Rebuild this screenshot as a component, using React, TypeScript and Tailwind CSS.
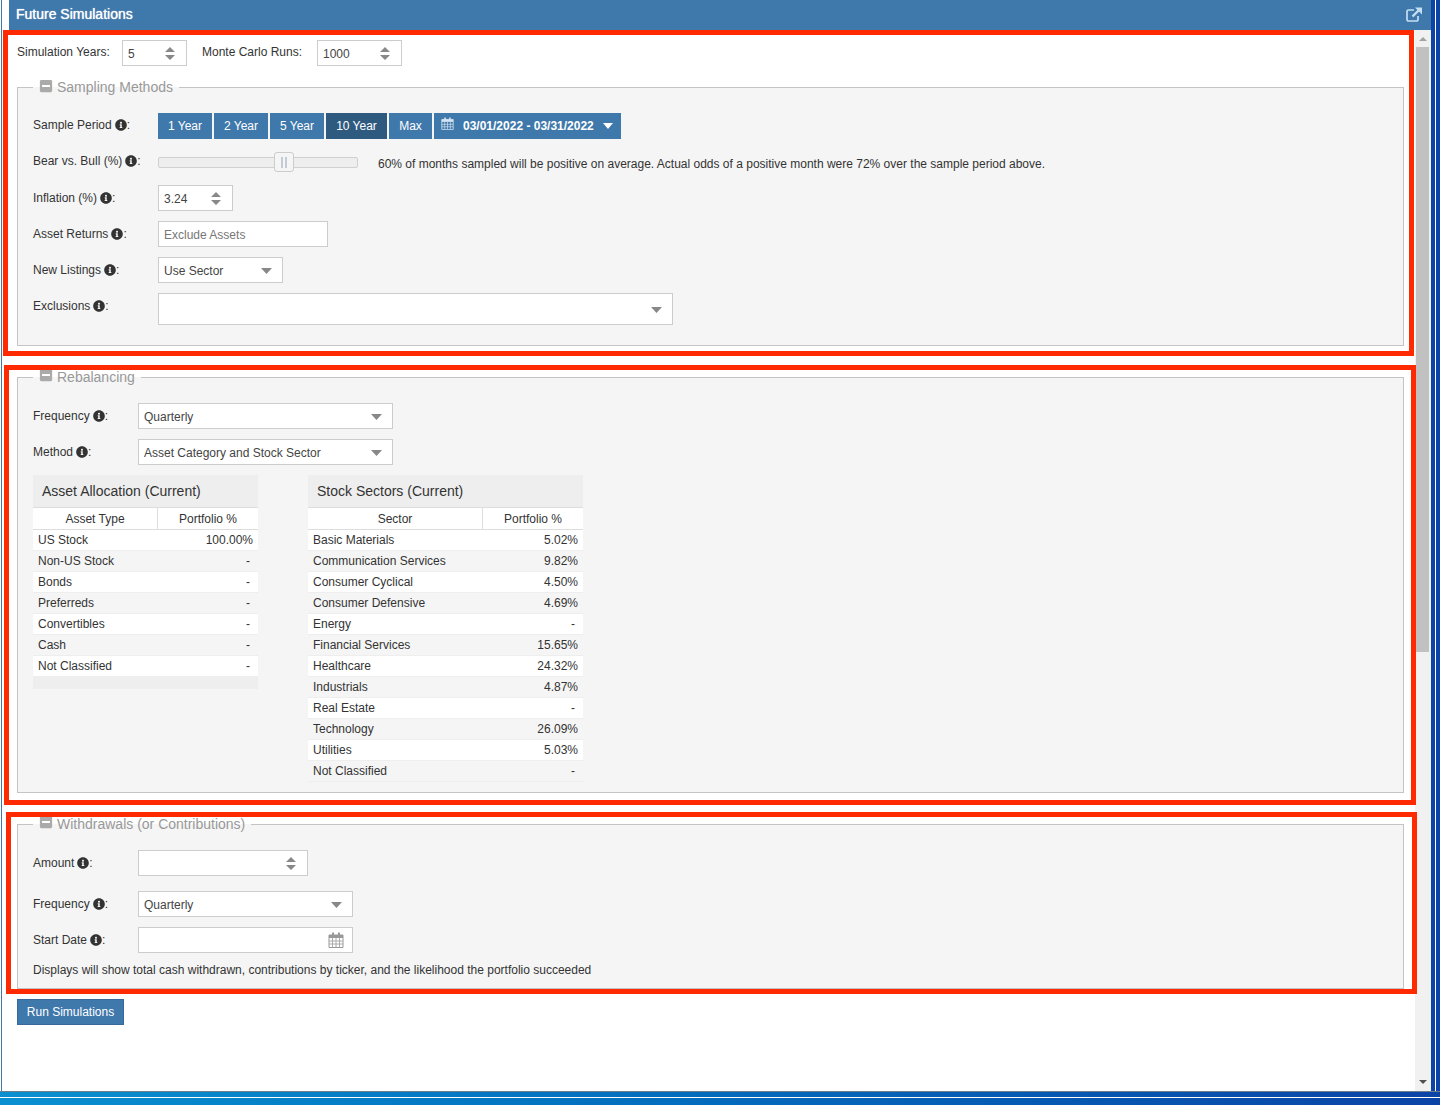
import { ReactNode } from "react";
import { FaInfoCircle, FaMinusSquare } from "react-icons/fa";

const assets = [
  ["US Stock", "100.00%"],
  ["Non-US Stock", "-"],
  ["Bonds", "-"],
  ["Preferreds", "-"],
  ["Convertibles", "-"],
  ["Cash", "-"],
  ["Not Classified", "-"],
];

const sectors = [
  ["Basic Materials", "5.02%"],
  ["Communication Services", "9.82%"],
  ["Consumer Cyclical", "4.50%"],
  ["Consumer Defensive", "4.69%"],
  ["Energy", "-"],
  ["Financial Services", "15.65%"],
  ["Healthcare", "24.32%"],
  ["Industrials", "4.87%"],
  ["Real Estate", "-"],
  ["Technology", "26.09%"],
  ["Utilities", "5.03%"],
  ["Not Classified", "-"],
];

const Caret = () => (
  <svg width="11" height="6" viewBox="0 0 11 6" className="shrink-0">
    <path d="M0 0h11L5.5 6z" fill="#888888" />
  </svg>
);

const Spinner = () => (
  <svg width="10" height="13" viewBox="0 0 10 13" className="shrink-0">
    <path d="M0 5L5 0l5 5zM0 8h10l-5 5z" fill="#888888" />
  </svg>
);

const Calendar = ({ color, size }: { color: string; size: number }) => (
  <svg width={size} height={size} viewBox="0 0 16 16" className="shrink-0">
    <path d="M1 3h14v12.500H1z" fill="none" stroke={color} />
    <path d="M1 3h14v3H1z" fill={color} />
    <path d="M4 0.500h2v3.500H4zM10 0.500h2v3.500h-2z" fill={color} />
    <path d="M1 9h14M1 12h14M4.500 6v9M8 6v9M11.500 6v9" stroke={color} strokeWidth="0.8" fill="none" />
  </svg>
);

const Label = ({ text, width }: { text: string; width: string }) => (
  <div className={`${width} shrink-0 flex items-center gap-[3px] text-[12px] text-[#333333]`}>
    <span>{text}</span>
    <span className="flex items-center">
      <FaInfoCircle size={12} color="#333333" />
      <span>:</span>
    </span>
  </div>
);

const Box = ({ width, height = "h-[26px]", children }: { width: string; height?: string; children?: ReactNode }) => (
  <div className={`${width} ${height} flex items-center justify-between border border-[#cccccc] bg-white pl-[5px] text-[12px] text-[#444444] pt-[1px]`}>
    {children}
  </div>
);

const Select = ({ width, height, text }: { width: string; height?: string; text?: string }) => (
  <Box width={width} height={height}>
    <span>{text}</span>
    <span className="pr-[10px] flex"><Caret /></span>
  </Box>
);

const NumberBox = ({ width, text }: { width: string; text?: string }) => (
  <Box width={width}>
    <span>{text}</span>
    <span className="pr-[11px] flex"><Spinner /></span>
  </Box>
);

const Section = ({ title, iconGap, children }: { title: string; iconGap: string; children: ReactNode }) => (
  <fieldset className="border border-[#c4c4c4] bg-[#f5f5f5] px-[15px]">
    <legend className="ml-0 px-[6px] h-[20px] flex items-center gap-[5px] text-[14px] text-[#999999]">
      <span className={`${iconGap} -mr-[1px] flex`}>
        <FaMinusSquare size={14} color="#aaaaaa" />
      </span>
      <span>{title}</span>
    </legend>
    {children}
  </fieldset>
);

const SummaryTable = ({
  title,
  col,
  width,
  firstCol,
  rows,
  filler,
}: {
  title: string;
  col: string;
  width: string;
  firstCol: string;
  rows: string[][];
  filler?: boolean;
}) => (
  <div className={`${width} text-[12px] text-[#333333]`}>
    <div className="h-[33px] flex items-center pl-[9px] bg-[#eeeeee] border-b border-[#dddddd] text-[14px]">{title}</div>
    <div className="flex h-[22px] bg-white border-b border-[#dddddd]">
      <div className={`${firstCol} flex items-center justify-center border-r border-[#dddddd]`}>{col}</div>
      <div className="flex-1 flex items-center justify-center">Portfolio %</div>
    </div>
    {rows.map(([name, value], i) => (
      <div key={name} className={`flex items-center justify-between h-[21px] pl-[5px] border-b border-[#eeeeee] ${i % 2 === 0 ? "bg-white" : ""}`}>
        <span>{name}</span>
        <span className={value === "-" ? "pr-[8px]" : "pr-[5px]"}>{value}</span>
      </div>
    ))}
    {filler && <div className="h-[12px] bg-[#eeeeee]" />}
  </div>
);

const periods = [
  { label: "1 Year", width: "w-[54px]" },
  { label: "2 Year", width: "w-[54px]" },
  { label: "5 Year", width: "w-[54px]" },
  { label: "10 Year", width: "w-[61px]", active: true },
  { label: "Max", width: "w-[43px]" },
];

export default function App() {
  return (
    <div className="relative w-[1440px] h-[1105px] overflow-hidden bg-white flex flex-col font-['Liberation_Sans',Arial,sans-serif]">
      <div className="flex h-[1091px]">
        <div className="w-[1px] bg-white" />
        <div className="w-[1px] bg-[#3f78ab]" />
        <div className="w-[1429px] flex flex-col">
          <div className="ml-[7px] h-[30px] bg-[#3f78ab] flex items-center justify-between pl-[7px] pr-[9px] text-[14px] text-white">
            <span className="mb-[2px] [text-shadow:0_0_1px_#ffffff]">Future Simulations</span>
            <svg width="16" height="15" viewBox="0 0 16 15" fill="none" stroke="#c5dff2" strokeWidth="1.7" className="mb-[1px]">
              <path d="M8 3H2.500a1.500 1.500 0 0 0-1.500 1.500v8A1.500 1.500 0 0 0 2.500 14h8a1.500 1.500 0 0 0 1.500-1.500V9" />
              <path d="M6.500 9.500L13.500 2.500" strokeWidth="2.400" />
              <path d="M9 0.500h7v7z" fill="#c5dff2" stroke="none" />
            </svg>
          </div>
          <div className="flex flex-1">
            <div className="w-[1413px] pl-[15px] pr-[11px] pt-[10px]">
              <div className="flex items-center h-[26px] text-[12px] text-[#333333]">
                <span className="w-[105px] mb-[2px]">Simulation Years:</span>
                <NumberBox width="w-[65px]" text="5" />
                <span className="ml-[15px] w-[115px] mb-[2px]">Monte Carlo Runs:</span>
                <NumberBox width="w-[85px]" text="1000" />
              </div>

              <div className="mt-[11px]">
                <Section title="Sampling Methods" iconGap="mb-[2px]">
                  <div className="pt-[16px] pb-[20px] flex flex-col gap-[10px]">
                    <div className="flex items-center">
                      <Label text="Sample Period" width="w-[125px] mb-[2px]" />
                      <div className="flex gap-[2px] text-[12px] text-white">
                        {periods.map((p) => (
                          <button key={p.label} className={`${p.width} h-[26px] ${p.active ? "bg-[#2f5a80]" : "bg-[#3f78ab]"}`}>
                            {p.label}
                          </button>
                        ))}
                        <button className="w-[187px] h-[26px] bg-[#3f78ab] flex items-center pl-[7px] font-bold">
                          <span className="mb-[5px] flex"><Calendar color="#d5e3f0" size={13} /></span>
                          <span className="ml-[9px]">03/01/2022 - 03/31/2022</span>
                          <svg width="10" height="6" viewBox="0 0 10 6" className="ml-[9px]"><path d="M0 0h10L5 6z" fill="#ffffff" /></svg>
                        </button>
                      </div>
                    </div>
                    <div className="flex items-center h-[26px]">
                      <Label text="Bear vs. Bull (%)" width="w-[125px] mb-[2px]" />
                      <div className="relative w-[200px] h-[11px] mt-[1px] bg-[#eeeeee] border border-[#d0d0d0] rounded-[2px]">
                        <div className="absolute left-[115px] top-[-6px] w-[20px] h-[20px] bg-[#f5f5f5] border border-[#cccccc] rounded-[3px] flex items-center justify-center gap-[2px]">
                          <span className="w-[2px] h-[11px] bg-[#c4cad6]" />
                          <span className="w-[2px] h-[11px] bg-[#c4cad6]" />
                        </div>
                      </div>
                      <span className="ml-[20px] mt-[3px] text-[12px] text-[#333333]">
                        60% of months sampled will be positive on average. Actual odds of a positive month were 72% over the sample period above.
                      </span>
                    </div>
                    <div className="flex items-center">
                      <Label text="Inflation (%)" width="w-[125px]" />
                      <NumberBox width="w-[75px]" text="3.24" />
                    </div>
                    <div className="flex items-center">
                      <Label text="Asset Returns" width="w-[125px]" />
                      <input
                        placeholder="Exclude Assets"
                        className="w-[170px] h-[26px] border border-[#cccccc] bg-white px-[5px] pt-[1px] text-[12px] placeholder:text-[#777777] outline-none"
                      />
                    </div>
                    <div className="flex items-center">
                      <Label text="New Listings" width="w-[125px]" />
                      <Select width="w-[125px]" text="Use Sector" />
                    </div>
                    <div className="flex items-start">
                      <div className="pt-[4px]"><Label text="Exclusions" width="w-[125px]" /></div>
                      <Select width="w-[515px]" height="h-[32px]" />
                    </div>
                  </div>
                </Section>
              </div>

              <div className="mt-[21px]">
                <Section title="Rebalancing" iconGap="mb-[4px]">
                  <div className="pt-[16px] pb-[10px]">
                    <div className="flex flex-col gap-[10px]">
                      <div className="flex items-center">
                        <Label text="Frequency" width="w-[105px]" />
                        <Select width="w-[255px]" text="Quarterly" />
                      </div>
                      <div className="flex items-center">
                        <Label text="Method" width="w-[105px]" />
                        <Select width="w-[255px]" text="Asset Category and Stock Sector" />
                      </div>
                    </div>
                    <div className="mt-[10px] flex items-start gap-[50px]">
                      <SummaryTable title="Asset Allocation (Current)" col="Asset Type" width="w-[225px]" firstCol="w-[125px]" rows={assets} filler />
                      <SummaryTable title="Stock Sectors (Current)" col="Sector" width="w-[275px]" firstCol="w-[175px]" rows={sectors} />
                    </div>
                  </div>
                </Section>
              </div>

              <div className="mt-[21px]">
                <Section title="Withdrawals (or Contributions)" iconGap="mb-[4px]">
                  <div className="pt-[16px] pb-[11px]">
                    <div className="flex items-center">
                      <Label text="Amount" width="w-[105px]" />
                      <NumberBox width="w-[170px]" />
                    </div>
                    <div className="flex items-center mt-[15px]">
                      <Label text="Frequency" width="w-[105px]" />
                      <Select width="w-[215px]" text="Quarterly" />
                    </div>
                    <div className="flex items-center mt-[10px]">
                      <Label text="Start Date" width="w-[105px]" />
                      <Box width="w-[215px]">
                        <span />
                        <span className="pr-[8px] mb-[1px] flex"><Calendar color="#999999" size={16} /></span>
                      </Box>
                    </div>
                    <p className="mt-[10px] h-[14px] leading-[14px] text-[12px] text-[#333333]">
                      Displays will show total cash withdrawn, contributions by ticker, and the likelihood the portfolio succeeded
                    </p>
                  </div>
                </Section>
              </div>

              <button className="mt-[10px] w-[107px] h-[26px] bg-[#3f78ab] border border-[#38699a] text-[12px] text-white">Run Simulations</button>
            </div>
            <div className="w-[16px] bg-[#f1f1f1] flex flex-col items-center pt-[7px]">
              <svg width="8" height="4" viewBox="0 0 8 4"><path d="M0 4l4-4 4 4z" fill="#a3a3a3" /></svg>
              <div className="mt-[6px] ml-[-2px] w-[13px] h-[605px] bg-[#c1c1c1]" />
              <svg width="8" height="4" viewBox="0 0 8 4" className="mt-[428px]"><path d="M0 0h8L4 4z" fill="#505050" /></svg>
            </div>
          </div>
        </div>
        <div className="flex w-[9px]">
          <div className="w-[4px] bg-[#0b44a6]" />
          <div className="w-[1px] bg-white" />
          <div className="w-[4px] bg-[#0b44a6]" />
        </div>
      </div>
      <div className="flex-1 flex flex-col bg-gradient-to-r from-[#0a90d0] to-[#0b44a6]">
        <div className="h-[1px] bg-[#6f7f8f]" />
        <div className="h-[5px]" />
        <div className="h-[1px] bg-white" />
      </div>

      <div className="absolute left-[3px] top-[30px] w-[1411px] h-[326px] border-[5px] border-[#ff2a00]" />
      <div className="absolute left-[4px] top-[365px] w-[1412px] h-[440px] border-[5px] border-[#ff2a00]" />
      <div className="absolute left-[6px] top-[812px] w-[1411px] h-[182px] border-[5px] border-[#ff2a00]" />
    </div>
  );
}
